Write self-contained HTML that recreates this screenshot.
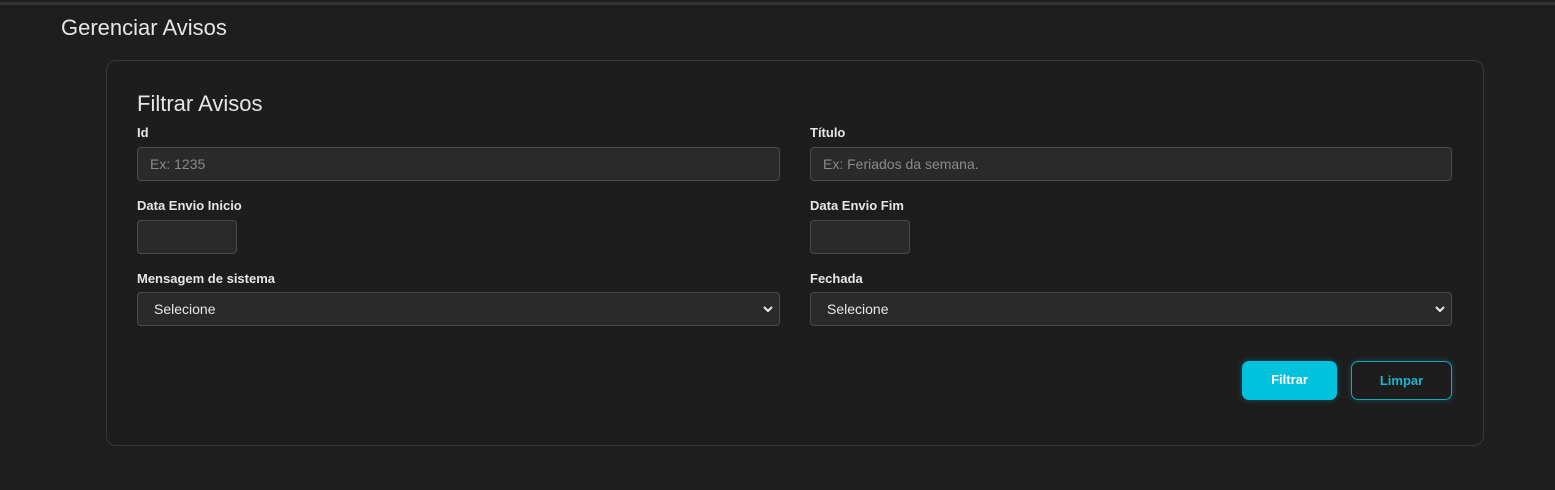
<!DOCTYPE html>
<html><head><style>
html,body{margin:0;padding:0;width:1555px;height:490px;background:#1e1e1e;font-family:"Liberation Sans",sans-serif;overflow:hidden;position:relative}
.top{position:absolute;left:0;top:2px;width:1555px;height:3px;background:#333}
h1{position:absolute;left:61px;top:15px;margin:0;font-weight:normal;font-size:22px;color:#e6e6e6}
.card{position:absolute;left:106px;top:60px;width:1378px;height:386px;border:1px solid #383838;border-radius:10px;box-sizing:border-box;background:#1d1d1d}
h2{position:absolute;left:137px;top:91px;margin:0;font-weight:normal;font-size:22px;color:#e6e6e6}
.lbl{position:absolute;font-size:13px;font-weight:bold;color:#e6e6e6}
.in{position:absolute;background:#2a2a2a;border:1px solid #4a4a4a;border-radius:4px;box-sizing:border-box;font-size:14px;color:#8a8a8a;padding-left:12px;line-height:32px}
.sel{color:#e6e6e6;padding-left:16px}
.sel svg{position:absolute;right:6px;top:12px}
.btn{position:absolute;top:361px;height:39px;border-radius:7px;box-sizing:border-box;font-size:13px;font-weight:bold;text-align:center;line-height:37px}
</style></head><body>
<div class="top"></div>
<h1>Gerenciar Avisos</h1>
<div class="card"></div>
<h2>Filtrar Avisos</h2>
<div class="lbl" style="left:137px;top:125px">Id</div>
<div class="lbl" style="left:810px;top:125px">Título</div>
<div class="in" style="left:137px;top:147px;width:643px;height:34px">Ex: 1235</div>
<div class="in" style="left:810px;top:147px;width:642px;height:34px">Ex: Feriados da semana.</div>
<div class="lbl" style="left:137px;top:198px">Data Envio Inicio</div>
<div class="lbl" style="left:810px;top:198px">Data Envio Fim</div>
<div class="in" style="left:137px;top:220px;width:100px;height:34px"></div>
<div class="in" style="left:810px;top:220px;width:100px;height:34px"></div>
<div class="lbl" style="left:137px;top:271px">Mensagem de sistema</div>
<div class="lbl" style="left:810px;top:271px">Fechada</div>
<div class="in sel" style="left:137px;top:292px;width:643px;height:34px">Selecione<svg width="10" height="8" viewBox="0 0 10 8"><path d="M1 2l4 4 4-4" stroke="#eee" stroke-width="2" fill="none"/></svg></div>
<div class="in sel" style="left:810px;top:292px;width:642px;height:34px">Selecione<svg width="10" height="8" viewBox="0 0 10 8"><path d="M1 2l4 4 4-4" stroke="#eee" stroke-width="2" fill="none"/></svg></div>
<div class="btn" style="left:1242px;width:95px;background:#00c2dc;color:#fff;box-shadow:0 0 6px rgba(0,194,220,.35)">Filtrar</div>
<div class="btn" style="left:1351px;width:101px;border:1px solid #16a9bd;color:#1bb5cc;box-shadow:0 0 6px rgba(0,194,220,.3)">Limpar</div>
</body></html>
